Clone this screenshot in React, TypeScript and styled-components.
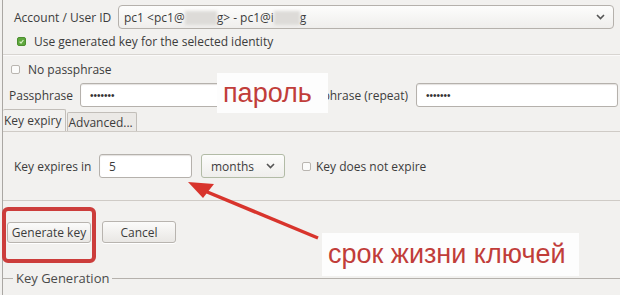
import React from "react";
import styled, { createGlobalStyle } from "styled-components";

const GlobalStyle = createGlobalStyle`
  body {
    margin: 0;
    background: #f2f1ef;
    font-family: "Open Sans", "Liberation Sans", sans-serif;
    color: #3c3c3c;
  }
`;

const Page = styled.div`
  position: relative;
  width: 620px;
  height: 295px;
  overflow: hidden;
  padding-left: 2px;
  box-sizing: border-box;
  background: #f2f1ef;
  font-size: 12px;
`;

const Frame = styled.div`
  height: 100%;
  border-left: 1px solid #aaa7a3;
  display: flex;
  flex-direction: column;
`;

const AccountRow = styled.div`
  display: flex;
  align-items: center;
  padding: 5px 6px 0 11px;
`;

const Label = styled.span<{ $w?: number }>`
  flex: none;
  width: ${(p) => (p.$w ? `${p.$w}px` : "auto")};
  white-space: nowrap;
`;

const Combo = styled.div`
  flex: 1;
  height: 24px;
  box-sizing: border-box;
  border: 1px solid #b5b1ac;
  border-radius: 4px;
  background: linear-gradient(#fdfdfc, #efeeec);
  display: flex;
  align-items: center;
  padding: 0 8px 0 5px;
`;

const Blur = styled.span<{ $w: number }>`
  display: inline-block;
  width: ${(p) => p.$w}px;
  height: 14px;
  vertical-align: middle;
  background: #dddbd8;
  filter: blur(1.5px);
`;

const Chevron = () => (
  <svg width="9" height="6" viewBox="0 0 9 6" style={{ marginLeft: "auto" }}>
    <path d="M1 1 L4.5 4.5 L8 1" fill="none" stroke="#555" strokeWidth="1.6" />
  </svg>
);

const CheckRow = styled.div<{ $pl: number; $mt: number; $gap?: number }>`
  display: flex;
  align-items: center;
  gap: ${(p) => p.$gap ?? 8}px;
  height: 14px;
  margin-top: ${(p) => p.$mt}px;
  padding-left: ${(p) => p.$pl}px;
`;

const Box = styled.span<{ $on?: boolean }>`
  flex: none;
  width: 7px;
  height: 7px;
  border-radius: 2px;
  border: 1px solid ${(p) => (p.$on ? "#4c8f2f" : "#b9b5b0")};
  background: ${(p) => (p.$on ? "#5fa73e" : "#fbfbfa")};
  display: flex;
  align-items: center;
  justify-content: center;
`;

const Separator = styled.div<{ $mt: number }>`
  margin-top: ${(p) => p.$mt}px;
  height: 1px;
  background: #d8d5d1;
  box-shadow: 0 1px 0 #fbfafa;
`;

const PassRow = styled.div`
  display: grid;
  grid-template-columns: 71px 1fr 134px 1fr;
  align-items: center;
  margin-top: 7px;
  padding: 0 2px 0 6px;
`;

const Input = styled.div<{ $w?: number }>`
  ${(p) => (p.$w ? `width: ${p.$w}px;` : "")}
  height: 24px;
  box-sizing: border-box;
  border: 1px solid #b5b1ac;
  border-radius: 3px;
  background: #fff;
  box-shadow: inset 0 1px 1px #e4e2df;
  display: flex;
  align-items: center;
  padding-left: 9px;
`;

const Dots = styled.span`
  font-family: "Liberation Sans", sans-serif;
  font-size: 10px;
  color: #333;
`;

const RightLabel = styled.span`
  text-align: right;
  padding-right: 8px;
  white-space: nowrap;
`;

const TabBar = styled.div`
  display: flex;
  align-items: flex-end;
  margin-top: 2px;
  height: 22px;
`;

const Tab = styled.div<{ $active?: boolean }>`
  height: ${(p) => (p.$active ? 22 : 19)}px;
  box-sizing: border-box;
  padding: 0 3px 0 1px;
  display: flex;
  align-items: center;
  border: 1px solid #c2beb9;
  border-left: ${(p) => (p.$active ? "none" : "1px solid #c2beb9")};
  border-bottom: none;
  border-radius: 2px 2px 0 0;
  background: ${(p) => (p.$active ? "#f2f1ef" : "#ebe9e6")};
  margin-right: 1px;
`;

const Pane = styled.div`
  height: 70px;
  border-top: 1px solid #cfcbc6;
  border-bottom: 1px solid #cfcbc6;
  padding: 22px 0 0 11px;
  box-sizing: border-box;
  display: flex;
  align-items: flex-start;
`;

const ExpireRow = styled.div`
  display: flex;
  align-items: center;
  height: 24px;
`;

const Select = styled.div`
  width: 84px;
  height: 24px;
  box-sizing: border-box;
  margin-left: 9px;
  border: 1px solid #b2bba6;
  border-radius: 3px;
  background: linear-gradient(#fcfcfb, #efeeec);
  display: flex;
  align-items: center;
  padding: 0 9px 0 9px;
`;

const ButtonRow = styled.div`
  display: flex;
  align-items: center;
  gap: 11px;
  margin-top: 20px;
  padding-left: 4px;
  height: 22px;
`;

const Button = styled.div<{ $w: number; $h: number }>`
  width: ${(p) => p.$w}px;
  height: ${(p) => p.$h}px;
  box-sizing: border-box;
  border: 1px solid #b8b4af;
  border-radius: 3px;
  background: linear-gradient(#fbfbfa, #e9e7e4);
  box-shadow: 0 1px 0 #fff;
  display: flex;
  align-items: center;
  justify-content: center;
`;

const Legend = styled.div`
  display: flex;
  align-items: center;
  gap: 3px;
  margin-top: 26px;
  font-size: 13px;
  color: #4a4a4a;
  &::before {
    content: "";
    width: 10px;
    height: 1px;
    background: #b5b1ac;
  }
  &::after {
    content: "";
    flex: 1;
    height: 1px;
    background: #b5b1ac;
  }
`;

const Note = styled.div<{ $x: number; $y: number; $w: number; $h: number }>`
  position: absolute;
  left: ${(p) => p.$x}px;
  top: ${(p) => p.$y}px;
  width: ${(p) => p.$w}px;
  height: ${(p) => p.$h}px;
  background: #fdfdfd;
  color: #c13d3a;
  font-family: "Liberation Sans", Arial, sans-serif;
  font-size: 27px;
  display: flex;
  align-items: center;
  padding-left: 6px;
  box-sizing: border-box;
`;

const Highlight = styled.div`
  position: absolute;
  left: 2px;
  top: 207px;
  width: 94px;
  height: 56px;
  box-sizing: border-box;
  border: 4px solid #cc3d3b;
  border-radius: 6px;
`;

const Arrow = styled.svg`
  position: absolute;
  left: 0;
  top: 0;
  pointer-events: none;
`;

export default function App() {
  return (
    <>
      <GlobalStyle />
      <Page>
        <Frame>
          <AccountRow>
            <Label $w={104}>Account / User ID</Label>
            <Combo>
              <span>
                pc1 &lt;pc1@<Blur $w={32} />g&gt; - pc1@i<Blur $w={26} />g
              </span>
              <Chevron />
            </Combo>
          </AccountRow>
          <CheckRow $pl={14} $mt={5}>
            <Box $on>
              <svg width="5" height="5" viewBox="0 0 5 5">
                <path d="M0.6 2.6 L2 4 L4.4 1" fill="none" stroke="#d9f0c9" strokeWidth="1.2" />
              </svg>
            </Box>
            Use generated key for the selected identity
          </CheckRow>
          <Separator $mt={6} />
          <CheckRow $pl={8} $mt={7}>
            <Box />
            No passphrase
          </CheckRow>
          <PassRow>
            <Label>Passphrase</Label>
            <Input>
              <Dots>•••••••</Dots>
            </Input>
            <RightLabel>Passphrase (repeat)</RightLabel>
            <Input>
              <Dots>•••••••</Dots>
            </Input>
          </PassRow>
          <TabBar>
            <Tab $active>Key expiry</Tab>
            <Tab>Advanced...</Tab>
          </TabBar>
          <Pane>
            <ExpireRow>
              <Label $w={85}>Key expires in</Label>
              <Input $w={93}>5</Input>
              <Select>
                months
                <Chevron />
              </Select>
              <CheckRow $pl={17} $mt={0} $gap={5}>
                <Box />
                Key does not expire
              </CheckRow>
            </ExpireRow>
          </Pane>
          <ButtonRow>
            <Button $w={84} $h={21}>Generate key</Button>
            <Button $w={74} $h={22}>Cancel</Button>
          </ButtonRow>
          <Legend>Key Generation</Legend>
        </Frame>

        <Note $x={217} $y={73} $w={111} $h={40}>пароль</Note>
        <Note $x={322} $y={233} $w={257} $h={43}>срок жизни ключей</Note>
        <Highlight />
        <Arrow width="620" height="295" viewBox="0 0 620 295">
          <line x1="318" y1="238" x2="200" y2="189" stroke="#d8342c" strokeWidth="3.5" />
          <polygon points="188,182 214,184 203,198" fill="#d8342c" />
        </Arrow>
      </Page>
    </>
  );
}
